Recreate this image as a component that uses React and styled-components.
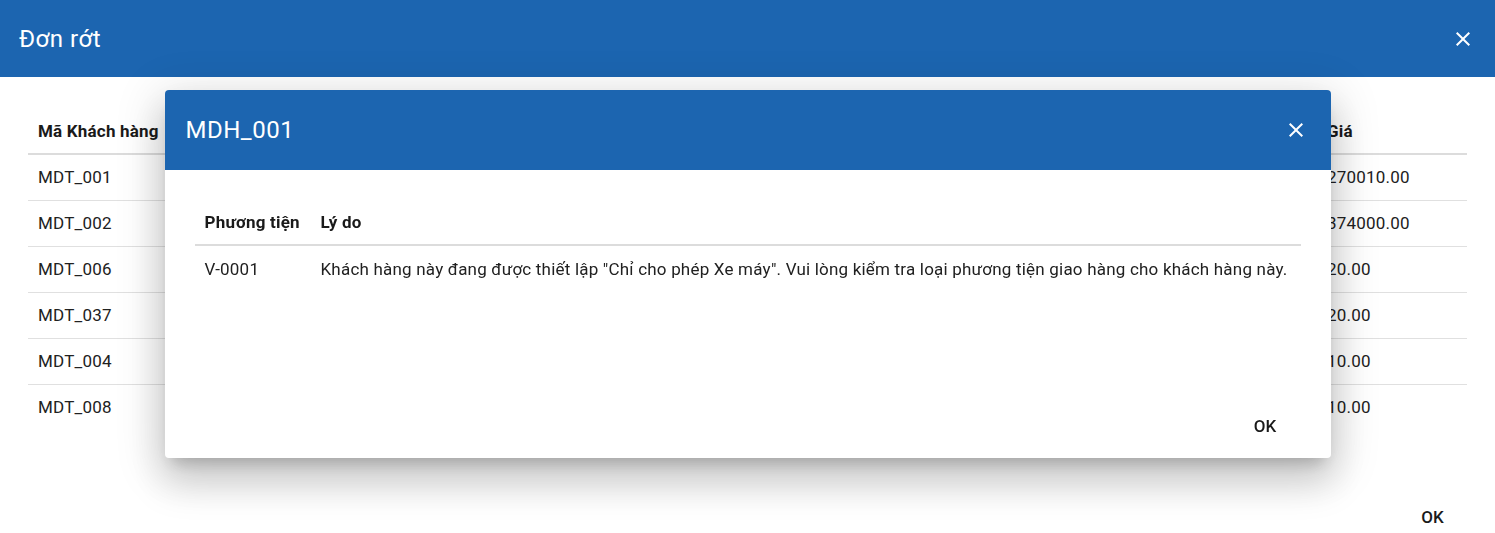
import React from "react"
import styled, { createGlobalStyle } from "styled-components"

const orders = [
  { code: "MDT_001", price: "270010.00" },
  { code: "MDT_002", price: "374000.00" },
  { code: "MDT_006", price: "20.00" },
  { code: "MDT_037", price: "20.00" },
  { code: "MDT_004", price: "10.00" },
  { code: "MDT_008", price: "10.00" },
]

const reasons = [
  {
    vehicle: "V-0001",
    reason:
      'Khách hàng này đang được thiết lập "Chỉ cho phép Xe máy". Vui lòng kiểm tra loại phương tiện giao hàng cho khách hàng này.',
  },
]

const CloseIcon = () => (
  <svg width="24" height="24" viewBox="0 0 24 24" fill="currentColor">
    <path d="M19 6.41 17.59 5 12 10.59 6.41 5 5 6.41 10.59 12 5 17.59 6.41 19 12 13.41 17.59 19 19 17.59 13.41 12z" />
  </svg>
)

const App = () => {
  return (
    <>
      <GlobalStyle />
      <Page>
        <Header>
          <Title>Đơn rớt</Title>
          <IconButton>
            <CloseIcon />
          </IconButton>
        </Header>
        <Content>
          <Table>
            <colgroup>
              <col />
              <col style={{ width: 150 }} />
            </colgroup>
            <thead>
              <tr>
                <Th>Mã Khách hàng</Th>
                <Th>Giá</Th>
              </tr>
            </thead>
            <tbody>
              {orders.map((o, i) => (
                <Row key={o.code} last={i === orders.length - 1}>
                  <Td>{o.code}</Td>
                  <Td>{o.price}</Td>
                </Row>
              ))}
            </tbody>
          </Table>
        </Content>
        <Actions>
          <TextButton>OK</TextButton>
        </Actions>
      </Page>

      <Overlay>
        <Dialog>
          <DialogHeader>
            <DialogTitle>MDH_001</DialogTitle>
            <IconButton>
              <CloseIcon />
            </IconButton>
          </DialogHeader>
          <DialogBody>
            <Table>
              <colgroup>
                <col style={{ width: 116 }} />
                <col />
              </colgroup>
              <thead>
                <tr>
                  <Th>Phương tiện</Th>
                  <Th>Lý do</Th>
                </tr>
              </thead>
              <tbody>
                {reasons.map((r) => (
                  <Row key={r.vehicle} last>
                    <Td>{r.vehicle}</Td>
                    <Td>{r.reason}</Td>
                  </Row>
                ))}
              </tbody>
            </Table>
          </DialogBody>
          <DialogActions>
            <TextButton>OK</TextButton>
          </DialogActions>
        </Dialog>
      </Overlay>
    </>
  )
}
export default App

const GlobalStyle = createGlobalStyle`
  html, body {
    margin: 0;
    padding: 0;
    height: 533px;
    overflow: hidden;
    background: #fff;
    font-family: Roboto, "Noto Sans", sans-serif;
    color: #212121;
  }
  * { box-sizing: border-box; }
`

const Page = styled.div`
  height: 533px;
  display: flex;
  flex-direction: column;
`

const Header = styled.div`
  height: 77px;
  flex: none;
  background: #1c65b0;
  color: #fff;
  display: flex;
  align-items: center;
  justify-content: space-between;
  padding: 0 20px 0 19px;
`

const Title = styled.h1`
  margin: 0;
  font-size: 24px;
  font-weight: 400;
  letter-spacing: 0.5px;
`

const IconButton = styled.button`
  border: 0;
  background: transparent;
  color: #fff;
  padding: 0;
  width: 24px;
  height: 24px;
  display: flex;
  align-items: center;
  justify-content: center;
  cursor: pointer;
`

const Content = styled.div`
  flex: 1;
  padding: 31px 28px 0;
`

const Table = styled.table`
  width: 100%;
  border-collapse: collapse;
  table-layout: fixed;
  font-size: 17px;
  letter-spacing: 0.2px;
`

const Th = styled.th`
  text-align: left;
  font-weight: 700;
  height: 46px;
  padding: 0 10px;
  border-bottom: 2px solid #dcdcdc;
  white-space: nowrap;
  overflow: hidden;
  color: #1a1a1a;
`

const Row = styled.tr`
  height: 46px;
  border-bottom: ${(p) => (p.last ? "none" : "1px solid #e0e0e0")};
`

const Td = styled.td`
  padding: 0 10px;
  white-space: nowrap;
  color: #212121;
`

const Actions = styled.div`
  height: 34px;
  flex: none;
  display: flex;
  justify-content: flex-end;
  align-items: flex-start;
  padding-right: 35px;
`

const TextButton = styled.button`
  border: 0;
  background: transparent;
  height: 36px;
  padding: 0 16px;
  font-family: Roboto, sans-serif;
  font-size: 17px;
  font-weight: 500;
  letter-spacing: 0.2px;
  color: #1a1a1a;
  cursor: pointer;
`

const Overlay = styled.div`
  position: fixed;
  inset: 0;
  display: flex;
  justify-content: center;
  align-items: flex-start;
  padding-top: 90px;
`

const Dialog = styled.div`
  width: 1166px;
  height: 368px;
  background: #fff;
  border-radius: 4px;
  overflow: hidden;
  display: flex;
  flex-direction: column;
  box-shadow: 0px 11px 15px -7px rgba(0, 0, 0, 0.2),
    0px 24px 38px 3px rgba(0, 0, 0, 0.14), 0px 9px 46px 8px rgba(0, 0, 0, 0.12);
`

const DialogHeader = styled.div`
  height: 80px;
  flex: none;
  background: #1c65b0;
  color: #fff;
  display: flex;
  align-items: center;
  justify-content: space-between;
  padding: 0 23px 0 21px;
`

const DialogTitle = styled.h2`
  margin: 0;
  font-size: 24px;
  font-weight: 400;
  letter-spacing: 0.5px;
`

const DialogBody = styled.div`
  flex: 1;
  padding: 29px 30px 0;
`

const DialogActions = styled.div`
  flex: none;
  display: flex;
  justify-content: flex-end;
  padding: 0 38px 14px;
`
